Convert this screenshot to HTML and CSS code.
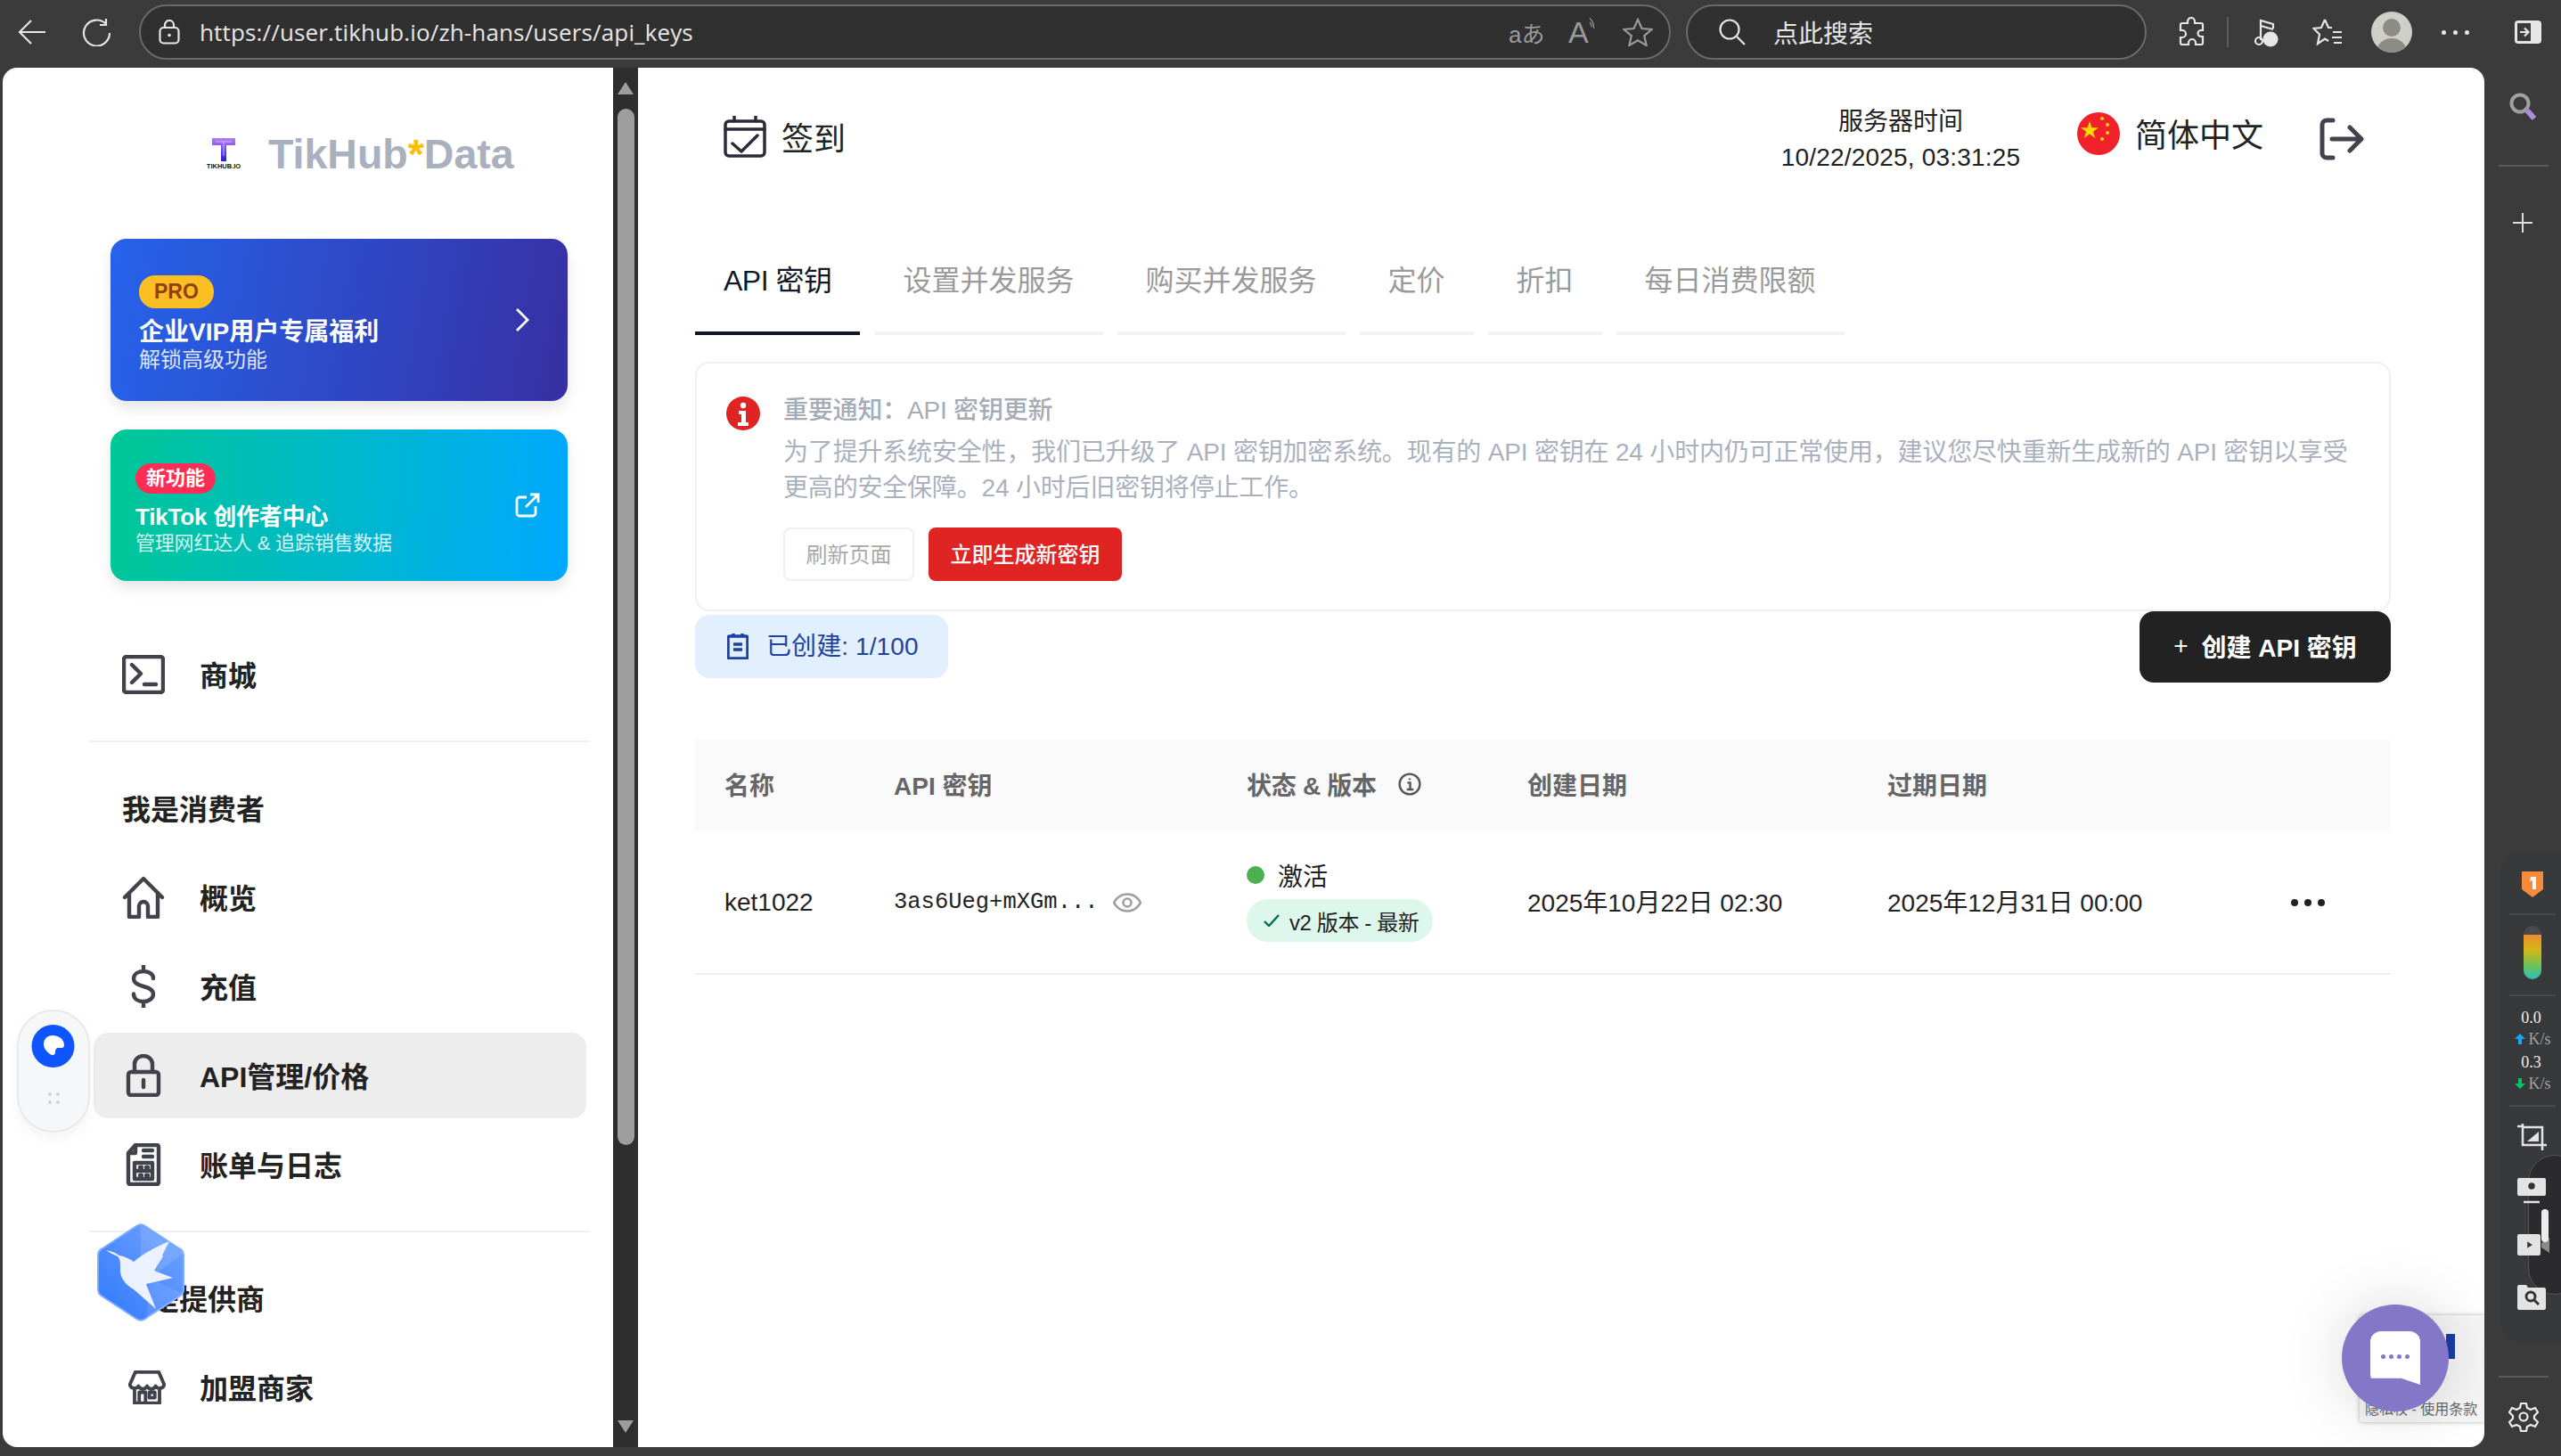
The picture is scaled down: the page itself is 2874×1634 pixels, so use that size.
FILE: index.html
```html
<!DOCTYPE html>
<html lang="zh-Hans">

<head>
    <meta charset="UTF-8">
    <meta name="viewport" content="width=device-width, initial-scale=1.0">
    <title>API 密钥</title>
    <link rel="stylesheet" href="styles.css">
</head>

<body>
    <div class="browser">
        <!-- browser toolbar -->
        <div class="toolbar">
            <svg class="tool tool--back" viewBox="0 0 32 28"><path d="M31 14H2M15 1L2 14l13 13" /></svg>
            <svg class="tool tool--reload" viewBox="0 0 33 32"><path d="M27 7a14.500 14.500 0 1 0 4 10M27 1v7h-7" /></svg>
            <div class="addressbar">
                <svg class="tool tool--lock" viewBox="0 0 24 28"><rect x="1.500" y="9" width="21" height="17.500" rx="4" /><path d="M7 9V6a5 5 0 0 1 10 0v3" /><circle class="tool-fill" cx="12" cy="17.500" r="1.800" /></svg>
                <span class="url">https://user.tikhub.io/zh-hans/users/api_keys</span>
                <span class="addressbar__translate">aあ</span>
                <span class="addressbar__read">A<svg viewBox="0 0 10 20"><path d="M1 2c4 3 6 8 6 14M1 7c2 2 3 4 3 7" /></svg></span>
                <svg class="tool tool--star" viewBox="0 0 34 32"><path d="M17 2l4.500 10 11 1-8.300 7.200 2.500 10.800L17 25.300 7.300 31l2.500-10.800L1.500 13l11-1z" /></svg>
            </div>
            <div class="searchbar">
                <svg class="tool tool--search" viewBox="0 0 30 30"><circle cx="12" cy="12" r="10.500" /><path d="M20 20l9 9" /></svg>
                <span>点此搜索</span>
            </div>
            <svg class="tool tool--puzzle" viewBox="0 0 30 34"><path d="M11 5a4 4 0 0 1 8 0v2h7a2 2 0 0 1 2 2v6h-2a3.500 3.500 0 0 0 0 7h2v7a2 2 0 0 1-2 2h-6v-2a4 4 0 0 0-8 0v2H5a2 2 0 0 1-2-2v-6h2a4 4 0 0 0 0-8H3V9a2 2 0 0 1 2-2h6z" /></svg>
            <span class="toolbar__sep"></span>
            <svg class="tool tool--music" viewBox="0 0 28 34"><path d="M8 26V4l14 4v5M8 10l14 4" /><circle cx="6" cy="27" r="4" /><circle class="tool-fill" cx="19" cy="25" r="8.500" /></svg>
            <svg class="tool tool--favs" viewBox="0 0 34 32"><path d="M14 2l4 9h4M14 2l-4 9-8.500 1 6.500 6.500L6 29l8-5.500 4 2.500M23 16h10M22 22h11M24 28h9" /></svg>
            <span class="avatar"><span class="avatar__head"></span><span class="avatar__body"></span></span>
            <span class="toolbar__more"><i></i><i></i><i></i></span>
            <svg class="tool tool--panel" viewBox="0 0 32 28"><rect class="tool-fill" x="1" y="1" width="30" height="26" rx="4" /><rect class="tool-cut" x="4" y="4" width="15" height="20" /><path class="tool-dark" d="M7 14h9M12 9.500l4.500 4.500-4.500 4.500" /></svg>
        </div>

        <div class="window">
            <div class="page">
                <aside class="sidebar">
                    <div class="logo">
                        <div class="logo__mark">
                            <svg viewBox="0 0 38 28">
                                <defs>
                                    <linearGradient id="logoT" x1="0" y1="0" x2="0" y2="1">
                                        <stop offset="0" stop-color="#b57bf5" />
                                        <stop offset="1" stop-color="#2a18d8" />
                                    </linearGradient>
                                </defs>
                                <path fill="url(#logoT)" d="M6 2h26v8H22v18h-6V10H6z" />
                                <path fill="none" stroke="#e7d6ff" stroke-width=".8" d="M10 6h18M19 6v16" />
                            </svg>
                            <span>TIKHUB.IO</span>
                        </div>
                        <span class="logo__name">TikHub<em>*</em>Data</span>
                    </div>

                    <a class="promo promo--vip">
                        <div class="promo__text">
                            <span class="promo__tag promo__tag--pro">PRO</span>
                            <div class="promo__title">企业VIP用户专属福利</div>
                            <div class="promo__sub">解锁高级功能</div>
                        </div>
                        <svg class="promo__icon promo__icon--chevron" viewBox="0 0 16 28"><path d="M2 2l12 12L2 26" /></svg>
                    </a>

                    <a class="promo promo--tiktok">
                        <div class="promo__text">
                            <span class="promo__tag promo__tag--new">新功能</span>
                            <div class="promo__title">TikTok 创作者中心</div>
                            <div class="promo__sub">管理网红达人 &amp; 追踪销售数据</div>
                        </div>
                        <svg class="promo__icon promo__icon--external" viewBox="0 0 28 28"><path d="M13 5H5a3 3 0 0 0-3 3v15a3 3 0 0 0 3 3h15a3 3 0 0 0 3-3v-8M12 16L26 2M17 2h9v9" /></svg>
                    </a>

                    <nav class="nav nav--first">
                        <a class="nav__item">
                            <span class="nav__icon"><svg viewBox="0 0 48 44"><rect x="2" y="2" width="44" height="40" rx="3" /><path d="M11 11l10 10-10 10M25 33h13" /></svg></span>
                            商城
                        </a>
                    </nav>
                    <div class="sidebar__divider"></div>
                    <div class="nav__heading">我是消费者</div>
                    <nav class="nav">
                        <a class="nav__item">
                            <span class="nav__icon"><svg viewBox="0 0 48 48"><path d="M3 24L24 3l21 21M8 19v27h11V34a5 5 0 0 1 10 0v12h11V19" /></svg></span>
                            概览
                        </a>
                        <a class="nav__item">
                            <span class="nav__icon"><svg viewBox="0 0 48 48"><path d="M35 15c0-5-5-8-11-8s-11 3-11 8.500c0 5 5 7 11 8.500s11 3.500 11 8.500c0 5-5 8.500-11 8.500s-11-3-11-8.500M24 1v6M24 41v6" /></svg></span>
                            充值
                        </a>
                        <a class="nav__item nav__item--active">
                            <span class="nav__icon"><svg viewBox="0 0 48 48"><rect x="7" y="20" width="34" height="26" rx="3" /><path d="M14 20v-9a10 9 0 0 1 20 0v9" /><path d="M24 29v8" /></svg></span>
                            API管理/价格
                        </a>
                        <a class="nav__item">
                            <span class="nav__icon"><svg viewBox="0 0 48 48"><path d="M15 2h24a2 2 0 0 1 2 2v40a2 2 0 0 1-2 2H9a2 2 0 0 1-2-2V11z" /><path d="M15 3v8H8M24 8h10M24 15h10M14 22h20v18H14zM14 31h20M20 27h2M27 27h2M20 36h2M27 36h2" /></svg></span>
                            账单与日志
                        </a>
                    </nav>
                    <div class="sidebar__divider"></div>
                    <div class="nav__heading">我是提供商</div>
                    <nav class="nav">
                        <a class="nav__item">
                            <span class="nav__icon nav__icon--store"><svg viewBox="0 0 48 44"><path d="M9 2h30l7 16a6 6 0 0 1-11 2 6 6 0 0 1-11 0 6 6 0 0 1-11 0 6 6 0 0 1-11-2zM8 24v18h32V24M14 42V28h8v14M27 28h7v7h-7z" /></svg></span>
                            加盟商家
                        </a>
                    </nav>
                </aside>

                <div class="scrollbar">
                    <span class="scrollbar__up"></span>
                    <span class="scrollbar__thumb"></span>
                    <span class="scrollbar__down"></span>
                </div>

                <main class="main">
                    <header class="header">
                        <div class="checkin">
                            <svg viewBox="0 0 48 47"><rect x="2" y="6" width="44" height="39" rx="4" /><path d="M2 15h44M12 0v6M36 0v6M10 31l10 9 18-18" /></svg>
                            签到
                        </div>
                        <div class="header__right">
                            <div class="server-time">
                                <div>服务器时间</div>
                                <div class="server-time__value">10/22/2025, 03:31:25</div>
                            </div>
                            <svg class="flag" viewBox="0 0 48 48">
                                <circle cx="24" cy="24" r="24" fill="#f0212b" />
                                <path fill="#ffd900" d="M14 10l2.400 7.200H24l-6.100 4.500 2.300 7.300-6.200-4.500L7.800 29l2.300-7.300L4 17.200h7.600z" />
                                <circle cx="28" cy="7" r="2" fill="#ffd900" />
                                <circle cx="34" cy="14" r="2" fill="#ffd900" />
                                <circle cx="34" cy="23" r="2" fill="#ffd900" />
                                <circle cx="28" cy="30" r="2" fill="#ffd900" />
                            </svg>
                            <span class="lang">简体中文</span>
                            <svg class="logout" viewBox="0 0 50 48"><path d="M15 3H8a5 5 0 0 0-5 5v32a5 5 0 0 0 5 5h7M14 24h33M34 11l13 13-13 13" /></svg>
                        </div>
                    </header>

                    <div class="tabs">
                        <a class="tab tab--active">API 密钥</a>
                        <a class="tab">设置并发服务</a>
                        <a class="tab">购买并发服务</a>
                        <a class="tab">定价</a>
                        <a class="tab">折扣</a>
                        <a class="tab">每日消费限额</a>
                    </div>

                    <section class="notice">
                        <svg class="notice__icon" viewBox="0 0 38 38"><circle cx="19" cy="19" r="19" fill="#e02424" /><circle cx="19" cy="10" r="3.200" fill="#fff" /><path fill="#fff" d="M14 16h8v13h3v4H13v-4h4v-9h-3z" /></svg>
                        <div class="notice__body">
                            <div class="notice__title">重要通知：API 密钥更新</div>
                            <p class="notice__text">为了提升系统安全性，我们已升级了 API 密钥加密系统。现有的 API 密钥在 24 小时内仍可正常使用，建议您尽快重新生成新的 API 密钥以享受<br>更高的安全保障。24 小时后旧密钥将停止工作。</p>
                            <div class="notice__actions">
                                <button class="btn btn--ghost">刷新页面</button>
                                <button class="btn btn--danger">立即生成新密钥</button>
                            </div>
                        </div>
                    </section>

                    <div class="key-bar">
                        <div class="key-count">
                            <svg viewBox="0 0 24 30"><path d="M7 1v4M17 1v4M3 4h18a2 2 0 0 1 2 2v21a2 2 0 0 1-2 2H3a2 2 0 0 1-2-2V6a2 2 0 0 1 2-2zM7 13h10M7 19h10" /></svg>
                            <span>已创建: 1/100</span>
                        </div>
                        <button class="create-btn"><span class="create-btn__plus">+</span>创建 API 密钥</button>
                    </div>

                    <table class="keys">
                        <colgroup>
                            <col class="keys__col-name">
                            <col class="keys__col-key">
                            <col class="keys__col-status">
                            <col class="keys__col-date">
                            <col class="keys__col-date">
                            <col>
                        </colgroup>
                        <thead>
                            <tr>
                                <th>名称</th>
                                <th>API 密钥</th>
                                <th>
                                    <span class="keys__status-head">状态 &amp; 版本
                                        <svg viewBox="0 0 24 24"><circle cx="12" cy="12" r="10.500" /><path d="M9.500 10.500H12.500V17M9 17.500h7M12 6v1.500" /></svg>
                                    </span>
                                </th>
                                <th>创建日期</th>
                                <th>过期日期</th>
                                <th></th>
                            </tr>
                        </thead>
                        <tbody>
                            <tr>
                                <td>ket1022</td>
                                <td>
                                    <span class="secret">3as6Ueg+mXGm...
                                        <svg viewBox="0 0 32 22"><path d="M1 11C5 4 10 1.500 16 1.500S27 4 31 11c-4 7-9 9.500-15 9.500S5 18 1 11z" /><circle cx="16" cy="11" r="4.500" /></svg>
                                    </span>
                                </td>
                                <td>
                                    <div class="status"><span class="status__dot"></span>激活</div>
                                    <span class="version">
                                        <svg viewBox="0 0 18 14"><path d="M1 8l5 5L17 1" /></svg>
                                        v2 版本 - 最新
                                    </span>
                                </td>
                                <td class="keys__date">2025年10月22日 02:30</td>
                                <td class="keys__date">2025年12月31日 00:00</td>
                                <td class="keys__more"><span><i></i><i></i><i></i></span></td>
                            </tr>
                        </tbody>
                    </table>
                </main>

                <!-- things floating over the page -->
                <div class="float-dock">
                    <svg viewBox="0 0 49 48"><circle cx="24.500" cy="24" r="24" fill="#0f55ff" /><path fill="#fff" d="M24 12c8 0 13 5 13 11 0 2-1 3-3 3h-3c-3 0-4 2-4 5 0 2-1 3-3 3-3 0-10-6-10-12 0-6 4-10 10-10z" /></svg>
                    <span class="float-dock__grip"><i></i><i></i><i></i><i></i></span>
                </div>

                <svg class="float-bird" viewBox="0 0 100 110">
                    <defs>
                        <linearGradient id="hexFill" x1="0" y1="1" x2="1" y2="0">
                            <stop offset="0" stop-color="#2f78ff" />
                            <stop offset="1" stop-color="#74a5ff" />
                        </linearGradient>
                    </defs>
                    <path fill="url(#hexFill)" stroke="#7fb0ff" stroke-width="2" d="M45 3a9 9 0 0 1 10 0l38 25a9 9 0 0 1 5 8v38a9 9 0 0 1-5 8l-38 25a9 9 0 0 1-10 0L7 82a9 9 0 0 1-5-8V36a9 9 0 0 1 5-8z" />
                    <path fill="#fff" opacity=".12" d="M50 2L98 33 60 62 50 50z" />
                    <path fill="#fff" opacity=".1" d="M60 62l38 17-42 29z" />
                    <path fill="#ebf1fd" d="M11 30C17 31 22 33 26 36 32 37 38 40 42 43 52 34 68 26 82 20L74 36 75 37 65 53 86 61 56 68 67 96 42 74C32 68 26 60 27 50 27 44 27 40 24 37 20 35 15 33 11 30z" />
                </svg>

                <div class="recaptcha">
                    <span class="recaptcha__flag"></span>
                    <span class="recaptcha__links">隐私权 - 使用条款</span>
                </div>

                <div class="chat-fab">
                    <span class="chat-fab__bubble"><i></i><i></i><i></i><i></i></span>
                </div>
            </div>

            <aside class="rail">
                <svg class="rail__search" viewBox="0 0 32 32"><circle cx="13" cy="12" r="9.500" /><path class="rail__search-tip" d="M21 20l8 9" /></svg>
                <span class="rail__line rail__line--top"></span>
                <svg class="rail__plus" viewBox="0 0 22 22"><path d="M11 0v22M0 11h22" /></svg>

                <div class="rail__panel">
                    <svg class="rail__shield" viewBox="0 0 24 29">
                        <path fill="#f98a3c" d="M0 0h24v20l-12 9-12-9z" />
                        <path fill="#fff" d="M10 6h6v14h-4V10l-3 1z" />
                    </svg>
                    <span class="rail__rule rail__rule--a"></span>
                    <span class="rail__thermo"></span>
                    <span class="rail__rule rail__rule--b"></span>
                    <div class="rail__speed">0.0</div>
                    <div class="rail__unit">
                        <svg class="rail__arrow rail__arrow--up" viewBox="0 0 12 12"><path d="M6 0l6 6H8v6H4V6H0z" /></svg>
                        K/s
                    </div>
                    <div class="rail__speed rail__speed--gap">0.3</div>
                    <div class="rail__unit">
                        <svg class="rail__arrow rail__arrow--down" viewBox="0 0 12 12"><path d="M6 12L0 6h4V0h4v6h4z" /></svg>
                        K/s
                    </div>
                    <span class="rail__rule rail__rule--c"></span>
                    <svg class="rail__tool rail__tool--crop" viewBox="0 0 34 30"><path d="M0 3h7M6 0v24h27M6 4h22v20M28 24v6" /><path class="rail__tool-fill" d="M11 20l13-11v11z" /></svg>
                    <svg class="rail__tool rail__tool--shot" viewBox="0 0 32 30"><rect class="rail__tool-fill" x="0" y="0" width="32" height="20" rx="2" /><circle fill="#333" cx="16" cy="9" r="5" /><path d="M7 27h18" /></svg>
                    <svg class="rail__tool rail__tool--video" viewBox="0 0 36 24"><rect class="rail__tool-fill" x="0" y="0" width="26" height="24" rx="2" /><path class="rail__tool-dim" d="M27 10l9-6v17l-9-6z" /><path fill="#333" d="M10 6l9 6-9 6z" /></svg>
                    <svg class="rail__tool rail__tool--find" viewBox="0 0 32 28"><path class="rail__tool-fill" d="M2 0h8l2 3h18a2 2 0 0 1 2 2v21a2 2 0 0 1-2 2H2a2 2 0 0 1-2-2V2a2 2 0 0 1 2-2z" /><circle class="rail__tool-cut" cx="15" cy="13" r="5" /><path class="rail__tool-cut" d="M19 17l5 5" /></svg>

                    <div class="rail__drawer"><span></span></div>
                </div>

                <span class="rail__line rail__line--bottom"></span>
                <svg class="rail__gear" viewBox="0 0 34 34"><path d="M14 2h6l1 5 4 2 5-2 3 5-4 4v3l4 4-3 5-5-2-4 2-1 5h-6l-1-5-4-2-5 2-3-5 4-4v-3l-4-4 3-5 5 2 4-2z" /><circle cx="17" cy="17" r="4.500" /></svg>
            </aside>
        </div>
    </div>
</body>

</html>
```

FILE: styles.css
```css
* {
    box-sizing: border-box;
}

html,
body {
    margin: 0;
    padding: 0;
    height: 100%;
    overflow: hidden;
}

body {
    background-color: #3b3b3b;
    color: #222;
    font-family: "Liberation Sans", "Noto Sans CJK SC", sans-serif;
}

a {
    color: inherit;
    text-decoration: none;
}

i {
    display: block;
}

svg {
    display: block;
    flex-shrink: 0;
}

.browser {
    display: flex;
    flex-direction: column;
    height: 100vh;
}

/* toolbar */
.toolbar {
    display: flex;
    align-items: center;
    height: 76px;
    flex-shrink: 0;
    padding-bottom: 4px;
    color: #e6e6e6;
}

.tool {
    fill: none;
    stroke: #e6e6e6;
    stroke-width: 2.200;
}

.tool-fill {
    fill: #e6e6e6;
    stroke: none;
}

.tool-cut {
    fill: #3b3b3b;
    stroke: none;
}

.tool-dark {
    fill: none;
    stroke: #e6e6e6;
}

.tool--back {
    width: 32px;
    height: 28px;
    margin-left: 20px;
}

.tool--reload {
    width: 33px;
    height: 32px;
    margin-left: 40px;
}

.addressbar {
    display: flex;
    align-items: center;
    width: 1719px;
    height: 62px;
    margin-left: 31px;
    padding-left: 20px;
    background-color: #303030;
    border: 2px solid #6a6a6a;
    border-radius: 31px;
}

.tool--lock {
    width: 24px;
    height: 28px;
}

.url {
    margin-left: 22px;
    font-family: "Open Sans", sans-serif;
    font-size: 26px;
    white-space: nowrap;
    letter-spacing: .150px;
    flex: 1;
}

.addressbar__translate {
    font-size: 26px;
    color: #9a9a9a;
    width: 34px;
    white-space: nowrap;
}

.addressbar__read {
    display: flex;
    align-items: flex-start;
    width: 30px;
    margin-left: 33px;
    font-size: 34px;
    line-height: 1;
    font-weight: 400;
    color: #9a9a9a;
}

.addressbar__read svg {
    width: 8px;
    height: 16px;
    fill: none;
    stroke: #9a9a9a;
    stroke-width: 1.500;
}

.tool--star {
    width: 34px;
    height: 32px;
    margin-left: 31px;
    margin-right: 18px;
    stroke: #9a9a9a;
}

.searchbar {
    display: flex;
    align-items: center;
    width: 517px;
    height: 62px;
    margin-left: 17px;
    padding-left: 35px;
    background-color: #303030;
    border: 2px solid #6a6a6a;
    border-radius: 31px;
    font-size: 28px;
}

.tool--search {
    width: 30px;
    height: 30px;
    margin-right: 31px;
}

.tool--puzzle {
    width: 30px;
    height: 34px;
    margin-left: 35px;
}

.toolbar__sep {
    width: 2px;
    height: 34px;
    margin-left: 25px;
    background-color: #5e5e5e;
}

.tool--music {
    width: 28px;
    height: 34px;
    margin-left: 28px;
}

.tool--favs {
    width: 34px;
    height: 32px;
    margin-left: 38px;
}

.avatar {
    position: relative;
    width: 46px;
    height: 46px;
    margin-left: 32px;
    border-radius: 50%;
    background-color: #cfcfca;
    overflow: hidden;
}

.avatar__head {
    position: absolute;
    left: 13px;
    top: 8px;
    width: 20px;
    height: 20px;
    border-radius: 50%;
    background-color: #8d8b86;
}

.avatar__body {
    position: absolute;
    left: 6px;
    top: 30px;
    width: 34px;
    height: 30px;
    border-radius: 50%;
    background-color: #8d8b86;
}

.toolbar__more {
    display: flex;
    gap: 8px;
    margin-left: 33px;
}

.toolbar__more i {
    width: 5px;
    height: 5px;
    border-radius: 50%;
    background-color: #e6e6e6;
}

.tool--panel {
    width: 32px;
    height: 28px;
    margin-left: 50px;
}

/* window */
.window {
    display: flex;
    height: 1548px;
}

.page {
    position: relative;
    display: flex;
    width: 2785px;
    margin-left: 3px;
    background-color: #fff;
    border-radius: 16px;
    overflow: hidden;
}

/* sidebar */
.sidebar {
    width: 685px;
    height: 100%;
    flex-shrink: 0;
    overflow: hidden;
}

.logo {
    display: flex;
    align-items: center;
    margin: 77px 0 0 229px;
    height: 39px;
}

.logo__mark {
    display: flex;
    flex-direction: column;
    align-items: center;
    width: 38px;
}

.logo__mark svg {
    width: 38px;
    height: 28px;
}

.logo__mark span {
    font-size: 7.500px;
    font-weight: 700;
    color: #111;
    white-space: nowrap;
    line-height: 11px;
}

.logo__name {
    margin-left: 31px;
    font-size: 46.500px;
    font-weight: 700;
    color: #a9b1bf;
    white-space: nowrap;
}

.logo__name em {
    font-style: normal;
    color: #fdbe00;
}

.promo {
    display: flex;
    align-items: center;
    justify-content: space-between;
    width: 513px;
    margin-left: 121px;
    border-radius: 18px;
    color: #fff;
    box-shadow: 0 8px 16px rgba(0, 0, 0, .1);
}

.promo__text {
    margin-top: 8px;
}

.promo--vip {
    height: 182px;
    margin-top: 76px;
    padding: 0 43px 0 32px;
    background: linear-gradient(100deg, #2563eb, #3730a3);
}

.promo--tiktok {
    height: 170px;
    margin-top: 32px;
    padding: 0 31px 0 28px;
    background: linear-gradient(95deg, #00c896, #00a8ff);
}

.promo__tag {
    display: inline-block;
    border-radius: 18px;
    white-space: nowrap;
}

.promo__tag--pro {
    padding: 0 17px;
    height: 37px;
    line-height: 37px;
    background-color: #fbbf24;
    color: #92400e;
    font-size: 23px;
    font-weight: 700;
}

.promo__tag--new {
    padding: 0 12px;
    height: 34px;
    line-height: 33px;
    background-color: #ff2d55;
    font-size: 22px;
    font-weight: 700;
}

.promo__title {
    font-weight: 700;
    line-height: 36px;
    white-space: nowrap;
}

.promo--vip .promo__title {
    margin-top: 9px;
    font-size: 28px;
}

.promo--tiktok .promo__title {
    margin-top: 8px;
    font-size: 26px;
    letter-spacing: -.200px;
}

.promo__sub {
    color: rgba(255, 255, 255, .85);
    white-space: nowrap;
}

.promo--vip .promo__sub {
    font-size: 24px;
    line-height: 26px;
}

.promo--tiktok .promo__sub {
    font-size: 22px;
    line-height: 24px;
    letter-spacing: -.200px;
}

.promo__icon {
    fill: none;
    stroke: #fff;
    stroke-width: 2.800;
}

.promo__icon--chevron {
    width: 16px;
    height: 28px;
}

.promo__icon--external {
    width: 28px;
    height: 28px;
}

.nav--first {
    margin-top: 57px;
}

.nav__item {
    display: flex;
    align-items: center;
    width: 553px;
    height: 96px;
    margin: 0 0 4px 102px;
    padding: 0 0 3px 32px;
    border-radius: 16px;
    font-size: 32px;
    font-weight: 700;
    white-space: nowrap;
}

.nav__item--active {
    background-color: #ededed;
}

.nav__icon {
    width: 48px;
    margin: 3px 39px 0 0;
}

.nav__icon svg {
    width: 48px;
    fill: none;
    stroke: #42424c;
    stroke-width: 4.400;
    stroke-linecap: round;
    stroke-linejoin: round;
}

.nav__icon--store svg {
    width: 42px;
    margin-left: 7px;
}

.sidebar__divider {
    width: 562px;
    height: 2px;
    margin: 26px 0 0 97px;
    background-color: #efefef;
}

.nav__heading {
    height: 48px;
    margin: 52px 0 26px 134px;
    font-size: 32px;
    font-weight: 700;
    line-height: 48px;
}

/* fake scrollbar */
.scrollbar {
    display: flex;
    flex-direction: column;
    align-items: center;
    justify-content: space-between;
    width: 28px;
    flex-shrink: 0;
    padding: 16px 0;
    background-color: #2e2e2e;
}

.scrollbar__up,
.scrollbar__down {
    width: 0;
    height: 0;
    border-left: 9px solid transparent;
    border-right: 9px solid transparent;
}

.scrollbar__up {
    border-bottom: 14px solid #9e9e9e;
}

.scrollbar__down {
    border-top: 14px solid #9e9e9e;
}

.scrollbar__thumb {
    width: 19px;
    height: 1163px;
    margin-bottom: 293px;
    border-radius: 10px;
    background-color: #9e9e9e;
}

/* main */
.main {
    flex: 1;
    min-width: 0;
    padding: 0 105px 0 64px;
}

.header {
    display: flex;
    align-items: center;
    justify-content: space-between;
    height: 154px;
    padding: 0 30px 0 32px;
}

.checkin {
    display: flex;
    align-items: center;
    gap: 17px;
    font-size: 36px;
}

.checkin svg {
    width: 48px;
    height: 47px;
    fill: none;
    stroke: #2b2a3a;
    stroke-width: 3.500;
    stroke-linecap: round;
    stroke-linejoin: round;
}

.header__right {
    display: flex;
    align-items: center;
}

.server-time {
    width: 270px;
    margin-top: 8px;
    font-size: 28px;
    line-height: 40px;
    text-align: center;
    white-space: nowrap;
}

.server-time__value {
    letter-spacing: .200px;
}

.flag {
    width: 48px;
    height: 48px;
    margin-left: 63px;
    margin-bottom: 6px;
}

.lang {
    width: 144px;
    margin-left: 17px;
    font-size: 36px;
    white-space: nowrap;
    margin-bottom: 8px;
}

.logout {
    width: 50px;
    height: 48px;
    margin-left: 63px;
    fill: none;
    stroke: #42424c;
    stroke-width: 5;
    stroke-linecap: round;
    stroke-linejoin: round;
    margin-top: 6px;
}

.tabs {
    display: flex;
    gap: 16px;
    margin-top: 61px;
}

.tab {
    padding: 0 32px 33px;
    border-bottom: 4px solid #f3f4f6;
    font-size: 32px;
    line-height: 48px;
    color: #9a9a9a;
    white-space: nowrap;
}

.tab--active {
    border-bottom-color: #111827;
    color: #111827;
    letter-spacing: -.500px;
}

.notice {
    display: flex;
    height: 280px;
    margin-top: 30px;
    padding: 32px 0 0 33px;
    border: 2px solid #f0f0f0;
    border-radius: 16px;
}

.notice__icon {
    width: 38px;
    height: 38px;
    margin-top: 5px;
}

.notice__body {
    margin-left: 26px;
}

.notice__title {
    font-size: 28px;
    font-weight: 500;
    line-height: 40px;
    color: #a5acb8;
    letter-spacing: -.200px;
    padding-top: 1px;
    margin-bottom: -1px;
}

.notice__text {
    margin: 8px 0 0;
    font-size: 28px;
    line-height: 40px;
    color: #a9b1bf;
    white-space: nowrap;
    letter-spacing: -.180px;
}

.notice__actions {
    display: flex;
    gap: 16px;
    margin-top: 24px;
}

.btn {
    height: 60px;
    padding: 0 0 4px;
    border-radius: 8px;
    font-family: inherit;
    font-size: 24px;
}

.btn--ghost {
    width: 147px;
    background-color: #fff;
    border: 2px solid #f0f0f0;
    color: #a9a9a9;
}

.btn--danger {
    width: 217px;
    background-color: #e02424;
    border: 0;
    color: #fff;
    font-weight: 500;
}

.key-bar {
    display: flex;
    justify-content: space-between;
    align-items: flex-start;
    height: 80px;
}

.key-count {
    display: flex;
    align-items: center;
    gap: 22px;
    width: 284px;
    height: 71px;
    margin-top: 4px;
    padding-left: 36px;
    background-color: #e1effe;
    border-radius: 16px;
    color: #1e429f;
    font-size: 28px;
    white-space: nowrap;
}

.key-count span {
    margin: 0 0 5px -2px;
    letter-spacing: .100px;
}

.key-count svg {
    width: 24px;
    height: 30px;
    fill: none;
    stroke: #1e429f;
    stroke-width: 3.500;
    margin-bottom: 2px;
}

.create-btn {
    display: flex;
    align-items: center;
    justify-content: center;
    width: 282px;
    height: 80px;
    padding: 0 0 3px;
    background-color: #222;
    border: 0;
    border-radius: 16px;
    color: #fff;
    font-family: inherit;
    font-size: 28px;
    font-weight: 700;
    white-space: nowrap;
}

.create-btn__plus {
    margin-right: 15px;
    font-weight: 400;
}

.keys {
    width: 100%;
    margin-top: 64px;
    border-collapse: collapse;
    table-layout: fixed;
    font-size: 28px;
}

.keys__col-name {
    width: 190px;
}

.keys__col-key {
    width: 396px;
}

.keys__col-status {
    width: 315px;
}

.keys__col-date {
    width: 404px;
}

.keys th,
.keys td {
    padding: 0 0 0 33px;
    text-align: left;
    white-space: nowrap;
}

.keys th {
    height: 103px;
    background-color: #fafafa;
    color: #666;
    font-weight: 700;
    padding-bottom: 4px;
}

.keys td {
    height: 160px;
    border-bottom: 2px solid #efefef;
}

.keys td.keys__date {
    padding-bottom: 3px;
}

.keys__status-head {
    display: flex;
    align-items: center;
    gap: 24px;
    letter-spacing: -.300px;
}

.keys__status-head svg {
    width: 26px;
    height: 26px;
    fill: none;
    stroke: #555;
    stroke-width: 2.200;
}

.secret {
    display: flex;
    align-items: center;
    gap: 16px;
    font-family: "Liberation Mono", monospace;
    font-size: 25.500px;
}

.secret svg {
    width: 32px;
    height: 22px;
    fill: none;
    stroke: #a0a0a0;
    stroke-width: 2.600;
}

.status {
    display: flex;
    align-items: center;
    gap: 15px;
    height: 40px;
    margin-top: -6px;
}

.status__dot {
    width: 20px;
    height: 20px;
    border-radius: 50%;
    background-color: #4caf50;
}

.version {
    display: inline-flex;
    align-items: center;
    gap: 11px;
    width: 209px;
    height: 48px;
    margin-top: 7px;
    padding-left: 19px;
    background-color: #def7ec;
    border-radius: 24px;
    font-size: 24px;
    letter-spacing: -.400px;
}

.version svg {
    width: 18px;
    height: 14px;
    fill: none;
    stroke: #046c4e;
    stroke-width: 2.400;
}

.keys td.keys__more {
    padding: 0;
}

.keys__more span {
    display: flex;
    gap: 7px;
    margin-left: 82px;
}

.keys__more i {
    width: 8px;
    height: 8px;
    border-radius: 50%;
    background-color: #222;
}

/* overlays */
.float-dock {
    position: absolute;
    left: 16px;
    top: 1057px;
    width: 82px;
    height: 138px;
    padding: 15px 0 0 14px;
    background-color: #f6f7f9;
    border: 2px solid #e9e9e9;
    border-radius: 41px;
    box-shadow: 0 6px 14px rgba(0, 0, 0, .05);
}

.float-dock svg {
    width: 49px;
    height: 48px;
}

.float-dock__grip {
    display: grid;
    grid-template-columns: 4px 4px;
    gap: 5px;
    margin: 28px 0 0 19px;
}

.float-dock__grip i {
    width: 4px;
    height: 4px;
    border-radius: 50%;
    background-color: #cfd2d8;
}

.float-bird {
    position: absolute;
    left: 105px;
    top: 1297px;
    width: 100px;
    height: 110px;
}

.recaptcha {
    position: absolute;
    right: 0;
    top: 1400px;
    width: 140px;
    height: 120px;
    background-color: #f5f5f5;
    border-radius: 3px 0 0 3px;
    box-shadow: 0 0 5px rgba(0, 0, 0, .3);
}

.recaptcha__flag {
    position: absolute;
    left: 97px;
    top: 21px;
    width: 10px;
    height: 28px;
    background-color: #1a3da8;
}

.recaptcha__links {
    position: absolute;
    left: 6px;
    bottom: 4px;
    font-size: 16px;
    color: #666;
    white-space: nowrap;
}

.chat-fab {
    position: absolute;
    left: 2625px;
    top: 1388px;
    display: flex;
    align-items: center;
    justify-content: center;
    width: 120px;
    height: 120px;
    border-radius: 50%;
    background-color: #8577c8;
    box-shadow: 0 0 70px rgba(0, 0, 0, .16);
}

.chat-fab__bubble {
    display: flex;
    align-items: center;
    justify-content: center;
    gap: 4px;
    width: 56px;
    height: 60px;
    background-color: #fff;
    border-radius: 12px 12px 0 12px;
    padding-bottom: 4px;
    clip-path: polygon(0 0, 100% 0, 100% 100%, 62% 88%, 0 88%);
}

.chat-fab__bubble i {
    width: 5px;
    height: 5px;
    border-radius: 50%;
    background-color: #8577c8;
}

/* right rail */
.rail {
    display: flex;
    flex-direction: column;
    flex: 1;
    min-width: 0;
}

.rail__search {
    width: 32px;
    height: 32px;
    margin: 28px 0 0 27px;
    fill: none;
    stroke: #a0a0a0;
    stroke-width: 4;
}

.rail__search-tip {
    stroke: #b18be0;
    stroke-width: 6;
}

.rail__line {
    display: block;
    width: 56px;
    height: 2px;
    margin-left: 16px;
    background-color: #5a5a5a;
}

.rail__line--top {
    margin-top: 49px;
}

.rail__plus {
    width: 22px;
    height: 22px;
    margin: 52px 0 0 32px;
    fill: none;
    stroke: #ddd;
    stroke-width: 2;
}

.rail__panel {
    position: relative;
    display: flex;
    flex-direction: column;
    width: 67px;
    height: 551px;
    margin: 695px 0 0 19px;
    padding-top: 22px;
    background-color: #38393b;
    border-radius: 20px 0 0 20px;
    overflow: hidden;
    color: #eee;
}

.rail__shield {
    width: 24px;
    height: 29px;
    margin-left: 23px;
}

.rail__rule {
    display: block;
    width: 52px;
    height: 2px;
    margin-left: 9px;
    background-color: #444a4d;
}

.rail__rule--a {
    margin-top: 18px;
}

.rail__thermo {
    display: block;
    width: 20px;
    height: 60px;
    margin: 12px 0 0 25px;
    border-radius: 10px;
    background: linear-gradient(#4a4a4e 0 10px, #ee8a2c 10px, #d3b716 45%, #6cc35a 75%, #2cbcc2);
}

.rail__rule--b {
    margin-top: 17px;
}

.rail__speed {
    margin-top: 15px;
    font-family: "Liberation Serif", serif;
    font-size: 18px;
    line-height: 19px;
    text-align: center;
}

.rail__speed--gap {
    margin-top: 6px;
}

.rail__unit {
    display: flex;
    align-items: center;
    justify-content: center;
    gap: 3px;
    height: 22px;
    margin-top: 3px;
    margin-left: 4px;
    font-family: "Liberation Serif", serif;
    font-size: 18px;
    color: #a0a0a0;
}

.rail__arrow {
    width: 12px;
    height: 12px;
}

.rail__arrow--up {
    fill: #19a6f5;
}

.rail__arrow--down {
    fill: #0cc068;
}

.rail__rule--c {
    margin-top: 13px;
}

.rail__tool {
    margin-left: 18px;
    z-index: 1;
    fill: none;
    stroke: #e3e3e3;
    stroke-width: 2.500;
}

.rail__tool-fill {
    fill: #e3e3e3;
    stroke: none;
}

.rail__tool-dim {
    fill: #8a8a8a;
    stroke: none;
}

.rail__tool-cut {
    fill: none;
    stroke: #333;
    stroke-width: 3;
}

.rail__tool--crop {
    position: relative;
    width: 34px;
    height: 30px;
    margin-top: 19px;
}

.rail__tool--shot {
    position: relative;
    width: 32px;
    height: 30px;
    margin-top: 31px;
}

.rail__tool--video {
    position: relative;
    width: 36px;
    height: 24px;
    margin-top: 33px;
}

.rail__tool--find {
    position: relative;
    width: 32px;
    height: 28px;
    margin-top: 33px;
}

.rail__drawer {
    position: absolute;
    left: 30px;
    top: 340px;
    width: 60px;
    height: 157px;
    background-color: #2b2b2d;
    border: 1px solid #555;
    border-radius: 40px;
}

.rail__drawer span {
    position: absolute;
    left: 14px;
    top: 60px;
    width: 8px;
    height: 37px;
    border-radius: 4px;
    background-color: #ececec;
    z-index: 2;
}

.rail__line--bottom {
    margin-top: 37px;
}

.rail__gear {
    width: 34px;
    height: 34px;
    margin: 27px 0 0 27px;
    fill: none;
    stroke: #eee;
    stroke-width: 2.200;
    stroke-linejoin: round;
}
```
